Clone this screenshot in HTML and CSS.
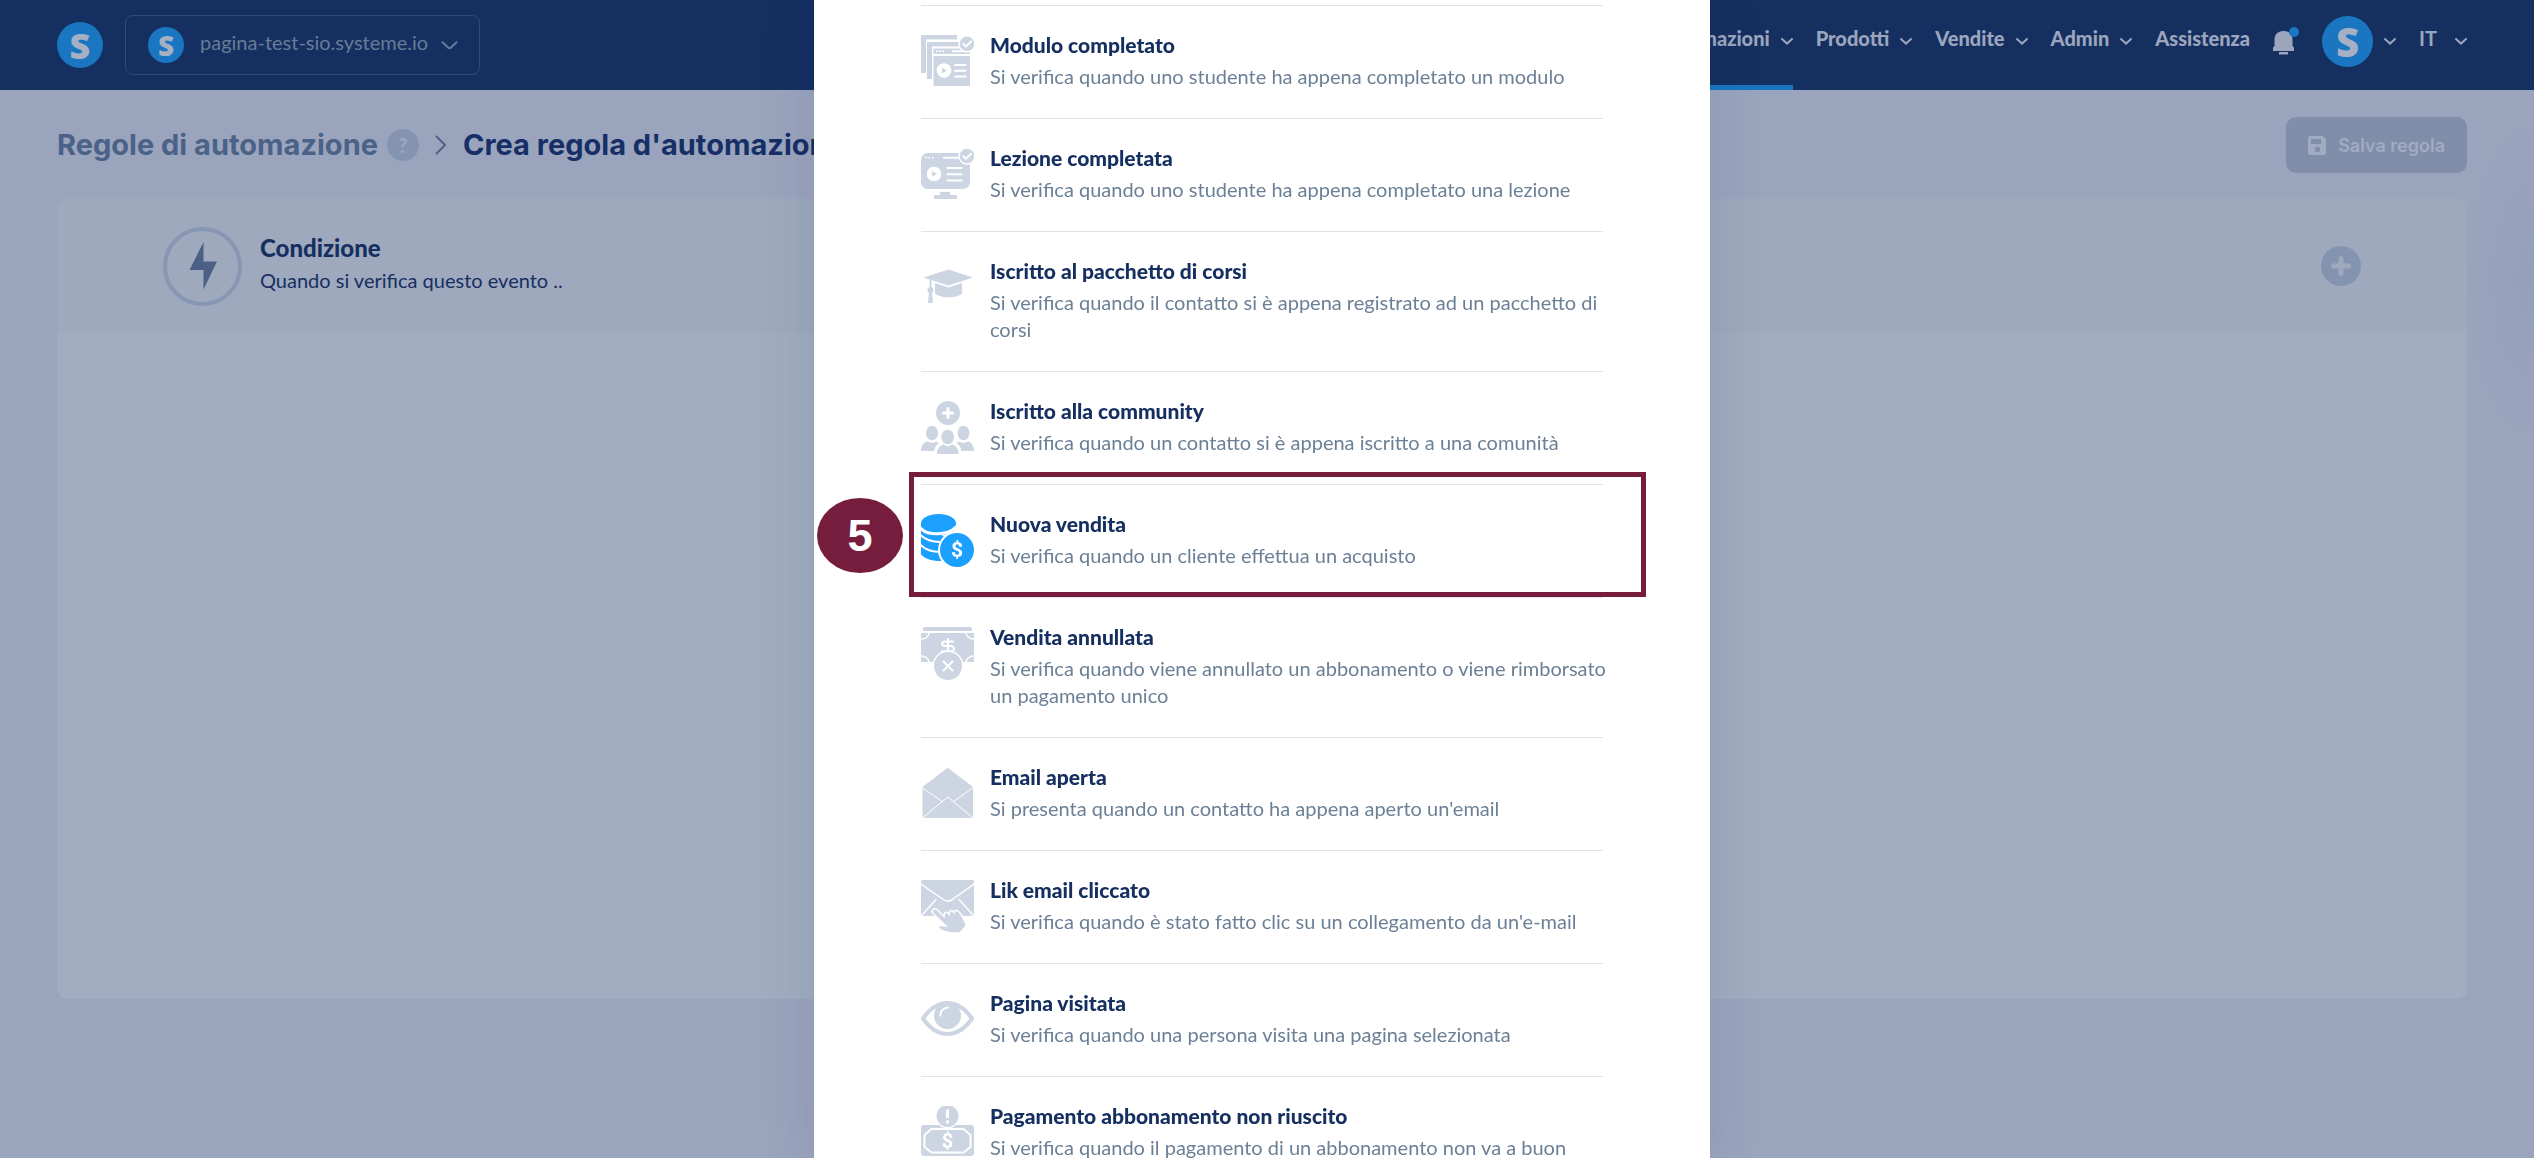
FILE: index.html
```html
<!DOCTYPE html>
<html lang="it">
<head>
<meta charset="utf-8">
<title>Crea regola d'automazione</title>
<link rel="stylesheet" href="styles.css">
</head>
<body>
<header class="topbar">
  <a class="logo logo-md" href="#" aria-label="Home">S</a>
  <button class="site-select" type="button">
    <span class="logo logo-sm">S</span>
    <span class="label">pagina-test-sio.systeme.io</span>
    <svg class="chevron-lg" viewBox="0 0 17 9"><path d="M1.500 1.200L7 6.500Q8.500 7.800 10 6.500L15.500 1.200"/></svg>
  </button>
  <nav class="nav">
    <a class="nav-item active" href="#"><span class="label">Automazioni</span><svg class="chevron" viewBox="0 0 12 7"><path d="M1 1L6 5.600L11 1"/></svg></a>
    <a class="nav-item" href="#"><span class="label">Prodotti</span><svg class="chevron" viewBox="0 0 12 7"><path d="M1 1L6 5.600L11 1"/></svg></a>
    <a class="nav-item" href="#"><span class="label">Vendite</span><svg class="chevron" viewBox="0 0 12 7"><path d="M1 1L6 5.600L11 1"/></svg></a>
    <a class="nav-item" href="#"><span class="label">Admin</span><svg class="chevron" viewBox="0 0 12 7"><path d="M1 1L6 5.600L11 1"/></svg></a>
    <a class="nav-item" href="#"><span class="label">Assistenza</span></a>
    <button class="nav-item bell" type="button" aria-label="Notifiche">
      <svg viewBox="0 0 26 28"><path class="bell-body" d="M0 24V20.500L1.500 19V13C1.500 7.500 4.500 4 10.500 4S19.500 7.500 19.500 13V19L21 20.500V24ZM6 25H15V27.500H6Z"/><circle class="bell-dot" cx="21" cy="5" r="5"/></svg>
    </button>
    <button class="nav-item account" type="button" aria-label="Account">
      <span class="logo logo-lg">S</span>
      <svg class="chevron" viewBox="0 0 12 7"><path d="M1 1L6 5.600L11 1"/></svg>
    </button>
    <button class="nav-item lang" type="button"><span class="label">IT</span><svg class="chevron" viewBox="0 0 12 7"><path d="M1 1L6 5.600L11 1"/></svg></button>
  </nav>
</header>

<main class="page">
  <div class="page-head">
    <a class="crumb" href="#">Regole di automazione</a>
    <button class="help" type="button" aria-label="Aiuto">?</button>
    <svg class="crumb-sep" viewBox="0 0 12 20"><path d="M1.500 1.500L10 10L1.500 18.500"/></svg>
    <h1 class="crumb current">Crea regola d'automazione</h1>
    <button class="save" type="button" disabled>
      <svg viewBox="0 0 18 19"><path fill-rule="evenodd" d="M2 0H14.500L18 3.500V17Q18 19 16 19H2Q0 19 0 17V2Q0 0 2 0ZM3 3V8H13V3ZM9.500 10.700A2.700 2.700 0 1 0 9.500 16.100A2.700 2.700 0 1 0 9.500 10.700Z"/></svg>
      Salva regola
    </button>
  </div>

  <section class="card">
    <div class="card-head">
      <span class="bolt"><svg viewBox="0 0 28 48"><path d="M14.500 0V19.500H28L14.500 47.500V28H0.500Z"/></svg></span>
      <div class="card-text">
        <h2>Condizione</h2>
        <p>Quando si verifica questo evento ..</p>
      </div>
      <button class="add" type="button" aria-label="Aggiungi"><svg viewBox="0 0 20 20"><path d="M10 2.500V17.500M2.500 10H17.500"/></svg></button>
    </div>
    <div class="card-body"></div>
  </section>
</main>

<div class="overlay">
  <div class="dialog" role="dialog" aria-label="Scegli un evento">
    <ul class="events">
      <li><button class="event" type="button">
        <svg class="icon" viewBox="0 0 53 53"><path d="M0 0H36V4.500H5V38H0ZM6 7H38V11.500H11V44H6ZM12.500 13.500H49V19H12.500ZM12.500 21H49V51H12.500Z"/><g class="cut"><circle cx="16" cy="16.200" r="1"/><circle cx="19" cy="16.200" r="1"/><circle cx="22.200" cy="16.200" r="1"/><circle cx="23" cy="35.500" r="7.300"/><circle cx="46" cy="8.800" r="8.800"/></g><path class="line w2" d="M32 16.200H46M34 30H44.500M34 35.700H44.500M34 41.500H44.500"/><path d="M21 32.800L26 35.500L21 38.200Z"/><circle cx="46" cy="8.800" r="7.300"/><path class="line w2" d="M42.300 9L45 11.500L50 6.500"/></svg>
        <span class="event-text"><strong>Modulo completato</strong><span>Si verifica quando uno studente ha appena completato un modulo</span></span>
      </button></li>
      <li><button class="event" type="button">
        <svg class="icon" viewBox="0 0 53 53"><rect y="5" width="49" height="36" rx="7"/><path d="M19 44H29V47H36V51H13V47H19Z"/><g class="cut"><circle cx="5" cy="9.800" r="1"/><circle cx="8.500" cy="9.800" r="1"/><circle cx="12" cy="9.800" r="1"/><circle cx="13" cy="26" r="7.300"/><circle cx="46" cy="8" r="8.800"/></g><path class="line w2" d="M23 9.800H37M26.500 20H40.500M26.500 26.200H40.500M26.500 32.500H40.500"/><path d="M11 23.300L16 26L11 28.700Z"/><circle cx="46" cy="8" r="7.300"/><path class="line w2" d="M42.300 8.200L45 10.700L50 5.700"/></svg>
        <span class="event-text"><strong>Lezione completata</strong><span>Si verifica quando uno studente ha appena completato una lezione</span></span>
      </button></li>
      <li><button class="event" type="button">
        <svg class="icon" viewBox="0 0 53 53"><path d="M27.500 8.500L52 16.500L27.500 24.500L2.500 16.500ZM14 22L27.500 26.500L41 22V32.500C36 37.500 19 37.500 14 32.500ZM8.500 18.500L10.500 19.200V27H8.500ZM8 31.500H11L12 42H7Z"/><circle cx="9.500" cy="29" r="3"/></svg>
        <span class="event-text"><strong>Iscritto al pacchetto di corsi</strong><span>Si verifica quando il contatto si è appena registrato ad un pacchetto di corsi</span></span>
      </button></li>
      <li><button class="event" type="button">
        <svg class="icon" viewBox="0 0 53 53"><circle cx="27" cy="12" r="12"/><path class="line w3" d="M27 7.500V16.500M22.500 12H31.500"/><ellipse cx="11" cy="32" rx="6" ry="7.300"/><ellipse cx="42.500" cy="32" rx="6" ry="7.300"/><ellipse cx="26.700" cy="36" rx="6.300" ry="7.300"/><path d="M16 53C16 47.500 18.500 45 22.500 43.300Q26.700 47 31 43.300C35 45 37.500 47.500 37.500 53ZM0 50C0 44.500 2.500 42 6 40.300Q11 43 15.500 40.500L18 42.500C14.500 44.500 13.500 47 13.300 50ZM53 50C53 44.500 50.500 42 47.500 40.300Q42.500 43 38 40.500L35.500 42.500C39 44.500 40 47 40.200 50Z"/></svg>
        <span class="event-text"><strong>Iscritto alla community</strong><span>Si verifica quando un contatto si è appena iscritto a una comunità</span></span>
      </button></li>
      <li><button class="event selected" type="button">
        <svg class="icon" viewBox="0 0 53 53"><path d="M0 10H35V38C31 45 24 47 18 47S4 45 0 40.500Z"/><path class="cut" d="M35 9L36 22L20 22L33 17Z"/><ellipse cx="17.500" cy="9.500" rx="17.500" ry="9.500"/><path class="line w3" d="M0 14.500C6 21.500 26 22 35 13"/><path class="line w2" d="M-1 20.500C5 27 13 28.500 22 28M-1 30.500C5 37 13 38.500 22 38"/><circle class="cut" cx="36" cy="36" r="19"/><circle cx="36" cy="36" r="17"/><text class="dollar" x="36" y="43" font-size="21">$</text></svg>
        <span class="event-text"><strong>Nuova vendita</strong><span>Si verifica quando un cliente effettua un acquisto</span></span>
      </button>
        <span class="marker-frame"></span>
        <span class="marker-number">5</span>
      </li>
      <li><button class="event" type="button">
        <svg class="icon" viewBox="0 0 53 53"><path d="M2 4V2Q2 0 4 0H49Q51 0 51 2V4ZM0 6H53V35H0Z"/><path class="line" d="M8 5.500A7.500 6.500 0 0 1 0 12M45 5.500A7.500 6.500 0 0 0 53 12M8 35.500A7.500 6.500 0 0 0 0 29M45 35.500A7.500 6.500 0 0 1 53 29"/><path class="line w2" d="M32 14.500H24.500C20 14.500 20 19 24.500 19H29.500C34 19 34 24.500 30 24.500H21M27 12V24"/><circle class="cut" cx="27" cy="39" r="15.500"/><circle cx="27" cy="39" r="14"/><path class="line w2" d="M22.500 34.500L31.500 43.500M31.500 34.500L22.500 43.500"/></svg>
        <span class="event-text"><strong>Vendita annullata</strong><span>Si verifica quando viene annullato un abbonamento o viene rimborsato un pagamento unico</span></span>
      </button></li>
      <li><button class="event" type="button">
        <svg class="icon" viewBox="0 0 53 53"><path d="M26.700 0.700L52 20V49.500Q52 51 50.500 51H3Q1.500 51 1.500 49.500V20Z"/><path class="line w1" d="M1 20.500L21 34.500M52.500 20.500L32.500 34.500M1.500 51L26.700 30L52 51"/></svg>
        <span class="event-text"><strong>Email aperta</strong><span>Si presenta quando un contatto ha appena aperto un'email</span></span>
      </button></li>
      <li><button class="event" type="button">
        <svg class="icon" viewBox="0 0 53 53"><rect width="53" height="36" rx="1.500"/><path class="line" d="M0 4L23 20Q26.700 22.500 30.500 20L53 4M1 35L15 19.500M52 35L38 19.500"/><path class="hand" d="M12 29.500C14 28 16 29 17 30.500L23 36.500C22.500 32 26 31 28 34C28 30 31 29.500 33 32.500C33.500 29.500 36 29.500 38 32L41 35.500L45.500 45.500L39 53C30 53.500 22 51.500 18 48.500C15 46 18 45 25 46L12.500 34C11 32.500 10.800 31 12 29.500Z"/></svg>
        <span class="event-text"><strong>Lik email cliccato</strong><span>Si verifica quando è stato fatto clic su un collegamento da un'e-mail</span></span>
      </button></li>
      <li><button class="event" type="button">
        <svg class="icon" viewBox="0 0 53 53"><path class="eye" d="M2 25.500C10 14 18 10 26.500 10S43 14 51 25.500C43 37 35 41 26.500 41S10 37 2 25.500Z"/><circle cx="26.500" cy="22.500" r="13.500"/><path class="line w2" d="M19.500 22.500C19.500 17.500 22 15 27 14.500"/></svg>
        <span class="event-text"><strong>Pagina visitata</strong><span>Si verifica quando una persona visita una pagina selezionata</span></span>
      </button></li>
      <li><button class="event" type="button">
        <svg class="icon" viewBox="0 0 53 53"><rect y="19" width="53" height="31" rx="3"/><path class="line w2" d="M10.500 23H42.500L49.500 29V41L42.500 46.500H10.500L3.500 41V29Z"/><circle class="cut" cx="26.500" cy="10" r="12.300"/><circle cx="26.500" cy="10" r="11"/><path class="line w3 butt" d="M26.500 3.500V12M26.500 14.500V17.500"/><text class="dollar" x="26.500" y="42" font-size="20">$</text></svg>
        <span class="event-text"><strong>Pagamento abbonamento non riuscito</strong><span>Si verifica quando il pagamento di un abbonamento non va a buon</span></span>
      </button></li>
    </ul>
  </div>
</div>
</body>
</html>
```
FILE: styles.css
```css
* { box-sizing: border-box; }

:root {
  --navy: #162f61;
  --accent: #1b76c1;
  --muted: #9ba6bd;
  --marker: #761c3d;
}

body {
  margin: 0;
  height: 100vh;
  overflow: hidden;
  background: radial-gradient(ellipse 70px 160px at 100% 280px, #949fb9, transparent) #9ba4bd;
  color: var(--navy);
  font-family: Lato, sans-serif;
  font-size: 20px;
  line-height: 27px;
}

h1, h2, p, ul { margin: 0; padding: 0; }
a { color: inherit; text-decoration: none; }
svg { display: block; flex: none; }

button {
  padding: 0;
  border: 0;
  background: none;
  color: inherit;
  font: inherit;
}

/* Header */
.topbar {
  display: flex;
  align-items: center;
  height: 90px;
  padding: 0 67px 0 57px;
  background: var(--navy);
  color: var(--muted);
}

.topbar .label { padding-bottom: 5px; white-space: nowrap; }

.logo {
  display: flex;
  align-items: center;
  justify-content: center;
  flex: none;
  border-radius: 50%;
  background: var(--accent);
  color: #a6b0c5;
  font-family: "Open Sans", sans-serif;
  font-weight: 800;
}

.logo-sm { width: 36px; height: 36px; font-size: 28px; }
.logo-md { width: 46px; height: 46px; font-size: 36px; }
.logo-lg { width: 51px; height: 51px; font-size: 40px; }

.site-select {
  display: flex;
  align-items: center;
  width: 355px;
  height: 60px;
  margin-left: 22px;
  padding: 0 21px 0 22px;
  border: 1px solid #2f4a76;
  border-radius: 8px;
  color: #667c98;
}

.site-select .label { margin: 0 auto 0 16px; }

.chevron, .chevron-lg {
  fill: none;
  stroke: currentColor;
  stroke-width: 2;
  stroke-linecap: round;
}

.chevron { width: 12px; height: 7px; }
.chevron-lg { width: 17px; height: 9px; }

.nav {
  display: flex;
  align-self: stretch;
  gap: 23px;
  margin-left: auto;
}

.nav-item {
  display: flex;
  align-items: center;
  gap: 11px;
  padding-bottom: 3px;
  border-bottom: 5px solid transparent;
  font-weight: 900;
}

.nav-item.active { border-color: var(--accent); }
.bell svg { width: 26px; height: 28px; }
.bell-body { fill: var(--muted); }
.bell-dot { fill: var(--accent); }
.lang { gap: 18px; font-weight: 700; }

/* Page */
.page { padding: 0 67px 0 57px; }

.page-head {
  display: flex;
  align-items: center;
  padding: 27px 0 26px;
}

.crumb {
  color: #4a6288;
  font-family: Inter, sans-serif;
  font-size: 29px;
  font-weight: 700;
  line-height: 36px;
  white-space: nowrap;
}

.crumb.current { color: #162f66; }

.help {
  width: 32px;
  height: 32px;
  margin-left: 9px;
  border-radius: 50%;
  background: #8494b0;
  color: var(--muted);
  font-weight: 900;
}

.crumb-sep {
  width: 12px;
  height: 20px;
  margin: 0 16px;
  fill: none;
  stroke: #4a6288;
  stroke-width: 2;
  stroke-linecap: round;
}

.save {
  display: flex;
  align-items: center;
  gap: 12px;
  height: 56px;
  margin-left: auto;
  padding: 0 22px;
  border-radius: 10px;
  background: #808ea9;
  color: #a0acc1;
  font-family: Inter, sans-serif;
  font-size: 18px;
  font-weight: 600;
}

.save svg { width: 18px; height: 19px; fill: currentColor; }

.card {
  overflow: hidden;
  border-radius: 10px;
  background: #a1acc0;
}

.card-head {
  display: flex;
  align-items: center;
  gap: 18px;
  height: 134px;
  padding: 0 106px;
  background: #9ea9bd;
}

.card-body { height: calc(100vh - 492px); }

.bolt {
  display: flex;
  align-items: center;
  justify-content: center;
  width: 79px;
  height: 79px;
  border: 4px solid #8797b3;
  border-radius: 50%;
}

.bolt svg { width: 28px; height: 48px; fill: #4b6084; }
.card-text { padding-bottom: 6px; }

.card-text h2 {
  margin-bottom: 5px;
  font-size: 24px;
  font-weight: 900;
  line-height: 29px;
}

.add {
  display: flex;
  align-items: center;
  justify-content: center;
  width: 40px;
  height: 40px;
  margin-left: auto;
  border-radius: 50%;
  background: #8494b0;
}

.add svg {
  width: 20px;
  height: 20px;
  stroke: #9ea9bd;
  stroke-width: 5;
  stroke-linecap: round;
}

/* Event picker */
.overlay {
  position: fixed;
  inset: 0;
  display: flex;
  justify-content: center;
  padding-right: 10px;
}

.dialog {
  width: 896px;
  padding: 5px 107px 0;
  overflow: hidden;
  background: #fff;
  box-shadow: 0 0 50px rgba(20, 40, 80, 0.12);
}

.events { list-style: none; }

.events li {
  position: relative;
  border-top: 1px solid #e0e3e7;
}

.event {
  display: flex;
  align-items: flex-start;
  gap: 16px;
  width: 100%;
  padding: 25px 0 28px;
  text-align: left;
}

.event-text {
  display: flex;
  flex: 1;
  flex-direction: column;
  gap: 4px;
  margin-right: -6px;
  color: #6b7f96;
}

.event-text strong {
  color: var(--navy);
  font-size: 21px;
  font-weight: 900;
  line-height: 28px;
}

.icon {
  width: 53px;
  height: 53px;
  margin-top: 4px;
  fill: #cdd5e3;
}

.selected .icon { fill: #1ca0ff; }
.icon .cut { fill: #fff; }

.icon .line {
  fill: none;
  stroke: #fff;
  stroke-width: 1.5;
  stroke-linecap: round;
  stroke-linejoin: round;
}

.icon .w1 { stroke-width: 1; }
.icon .w2 { stroke-width: 2; }
.icon .w3 { stroke-width: 3; }
.icon .butt { stroke-linecap: butt; }
.icon .hand { stroke: #fff; stroke-width: 1.5; }
.icon .eye { fill: none; stroke: #cdd5e3; stroke-width: 4; }

.icon .dollar {
  fill: #fff;
  font-family: Roboto, sans-serif;
  font-weight: 700;
  text-anchor: middle;
}

.marker-frame {
  position: absolute;
  inset: -13px -43px 0 -12px;
  border: 5px solid var(--marker);
  pointer-events: none;
}

.marker-number {
  position: absolute;
  top: 13px;
  left: -104px;
  width: 86px;
  height: 75px;
  border-radius: 50%;
  background: var(--marker);
  color: #fff;
  font: 700 45px/75px "Liberation Sans", sans-serif;
  text-align: center;
}
```
